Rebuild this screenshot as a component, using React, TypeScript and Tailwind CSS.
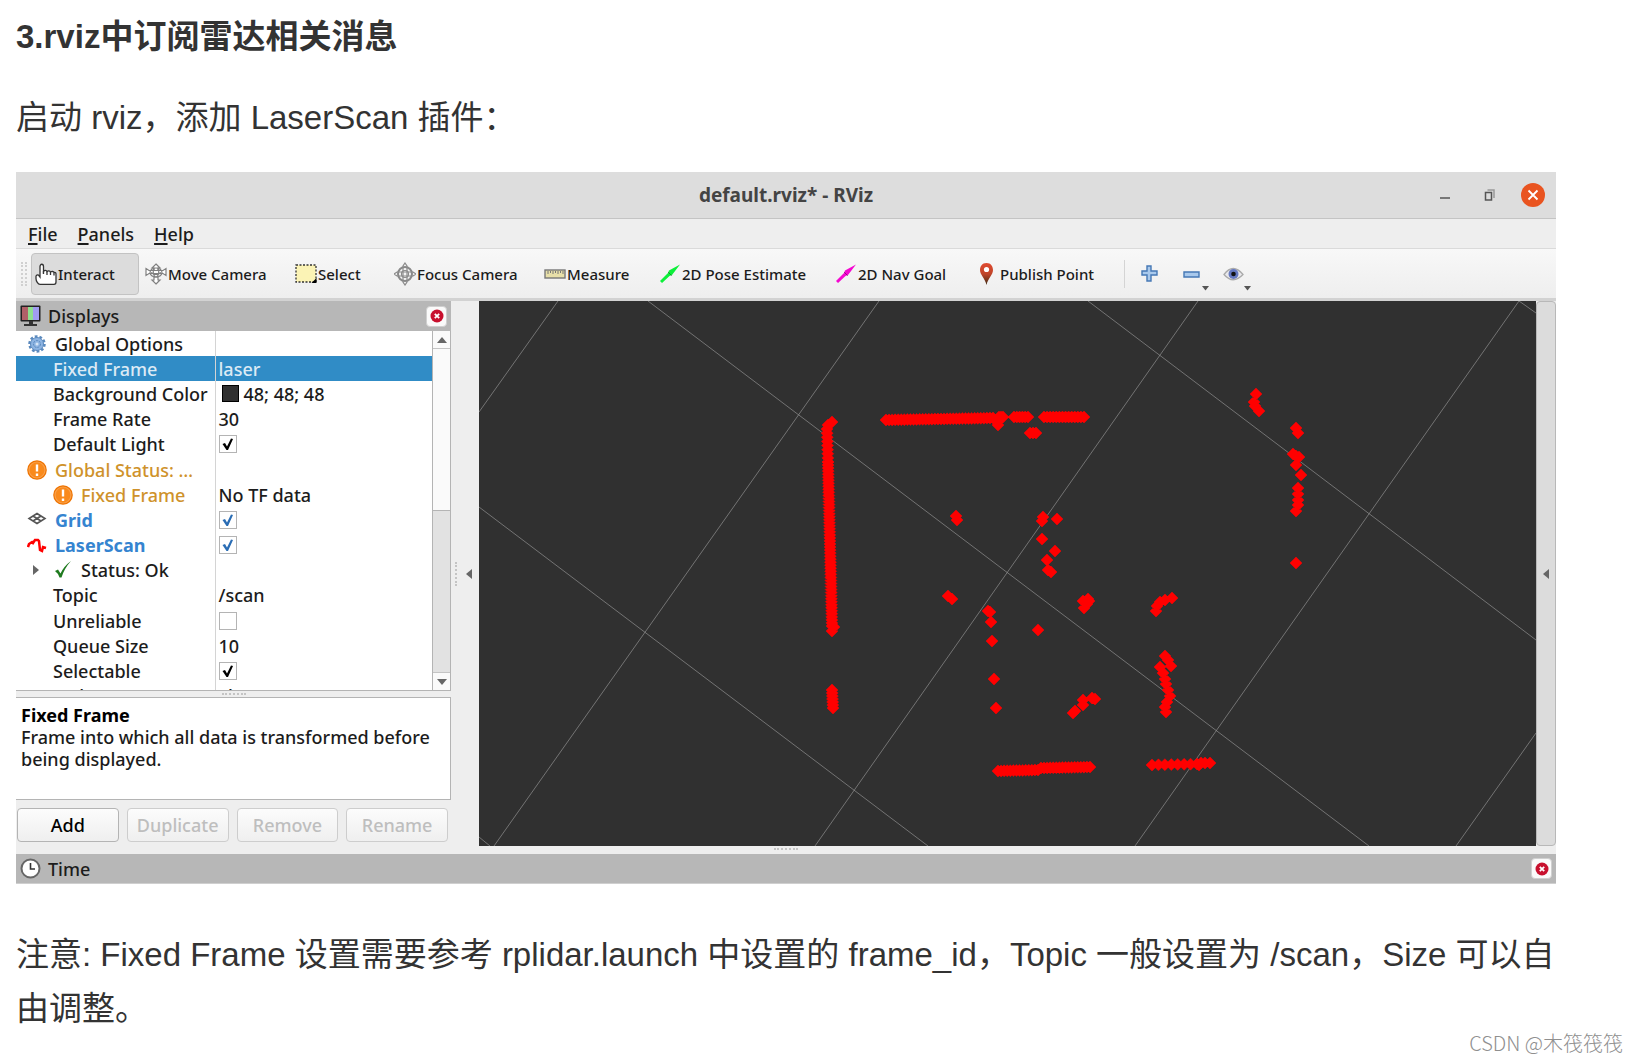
import type { ReactNode } from "react";
import clsx from "clsx";

type Point = [number, number];

type DisplayRow = {
  id: string;
  name: string;
  icon?: ReactNode;
  value?: string;
  checked?: boolean;
  swatch?: boolean;
  kind?: "selected" | "warning" | "display";
  nested?: boolean;
  expandable?: boolean;
};

const gridLines: [Point, Point][] = [
  [[479, 837], [490, 846]],
  [[479, 507], [928, 846]],
  [[648, 301], [1369, 846]],
  [[1088, 301], [1536, 640]],
  [[1519, 301], [1536, 313]],
  [[558, 301], [479, 412]],
  [[879, 301], [494, 846]],
  [[1198, 301], [815, 846]],
  [[1519, 301], [1135, 846]],
  [[1536, 733], [1456, 846]],
];

// each run is a wall seen by the scanner: start, end, number of hits
const scanRuns: [Point, Point, number][] = [
  [[827, 429], [828, 462], 9],
  [[828, 462], [832, 626], 55],
  [[832, 690], [833, 708], 7],
  [[886, 420], [993, 418], 36],
  [[999, 417], [1003, 417], 3],
  [[1014, 417], [1028, 417], 6],
  [[1044, 417], [1084, 417], 14],
  [[998, 771], [1038, 770], 14],
  [[1041, 768], [1090, 767], 17],
  [[1152, 765], [1197, 764], 8],
];

const scanPoints: Point[] = [
  [832, 422], [828, 425], [834, 627], [832, 631],
  [998, 425], [1030, 433], [1033, 433], [1036, 433],
  [956, 516], [957, 520], [1043, 517], [1042, 521], [1057, 519],
  [1042, 539], [1055, 551], [1047, 560], [1048, 570], [1051, 572],
  [948, 596], [952, 599], [988, 611], [990, 612], [991, 622], [992, 641], [1038, 630],
  [1083, 601], [1088, 599], [1089, 601], [1084, 608], [1087, 604],
  [1172, 598], [1165, 600], [1160, 602], [1157, 606], [1156, 611],
  [1165, 656], [1168, 660], [1171, 666], [1160, 667], [1163, 673], [1165, 679],
  [1166, 684], [1168, 690], [1170, 696], [1167, 702], [1165, 707], [1166, 712],
  [994, 679], [996, 708], [1073, 713], [1075, 711], [1083, 705], [1083, 700],
  [1092, 698], [1095, 699], [1199, 765], [1201, 763], [1205, 763], [1210, 763],
  [1256, 394], [1254, 402], [1255, 406], [1259, 411], [1296, 428], [1298, 433],
  [1293, 454], [1296, 456], [1299, 457], [1296, 465], [1301, 475], [1298, 488],
  [1298, 494], [1298, 500], [1298, 505], [1296, 511], [1296, 563],
];

const hits: Point[] = [
  ...scanRuns.flatMap(([a, b, n]) =>
    Array.from({ length: n }, (_, i): Point => {
      const t = i / (n - 1);
      return [a[0] + (b[0] - a[0]) * t, a[1] + (b[1] - a[1]) * t];
    }),
  ),
  ...scanPoints,
];

function SceneView() {
  return (
    <svg
      className="block h-[545px] min-w-0 flex-1 bg-[#303030]"
      viewBox="479 301 1057 545"
      preserveAspectRatio="xMidYMid slice"
      role="img"
      aria-label="Laser scan"
    >
      {gridLines.map(([a, b]) => (
        <line
          key={`${a}-${b}`}
          x1={a[0]}
          y1={a[1]}
          x2={b[0]}
          y2={b[1]}
          stroke="#a0a0a0"
          strokeOpacity="0.6"
        />
      ))}
      <path
        d={hits.map(([x, y]) => `M${x} ${y - 6}l6 6-6 6-6-6z`).join("")}
        fill="#f00"
        stroke="#f00"
        strokeWidth="0.500"
      />
    </svg>
  );
}

function HandIcon() {
  return (
    <svg className="h-[22px] w-[22px]" viewBox="0 0 22 22" fill="#fff" stroke="#333" strokeWidth="1.3">
      <path d="M5 14V3.500C5 .5 8.500 .5 8.500 3.500V8.500C9.500 7 11.500 7.200 12 8.500 13 7.500 15 7.700 15.500 9 17 8 18.500 8.500 19 9.500 20.500 9 21 10 21 11V19Q21 21.300 19 21.300H5C3 21.300 1 18 1 15.500V13Q2 11.500 3.500 12L5 14Z" />
      <path d="M12 8.500V12M15.500 9V12M19 10V12.500M8.500 8V11" fill="none" />
    </svg>
  );
}

function MoveIcon() {
  return (
    <svg className="h-[22px] w-[22px]" viewBox="0 0 22 22" fill="#fff" stroke="#808080" strokeWidth="1.2">
      <path d="M11 1l4 4h-2v3H9V5H7zM11 21l4-4h-2v-3H9v3H7z" />
      <path d="M1 5.500l3 2h14l3-2v7l-3-2H4l-3 2z" />
      <ellipse cx="11" cy="9.500" rx="6" ry="4.500" fill="none" />
      <path d="M6 9.500q5 4 10 0M9 5.500q-2 4 1 8.500M13 5.500q2 4-1 8.500" fill="none" />
    </svg>
  );
}

function SelectIcon() {
  return (
    <svg className="h-[22px] w-[22px]" viewBox="0 0 22 22">
      <rect x="1" y="2" width="20" height="17" fill="#fbf3b5" stroke="#333" strokeWidth="1.300" strokeDasharray="2 1.500" />
      <path d="M21.500 15v5h-5z" fill="#000" />
    </svg>
  );
}

function FocusIcon() {
  return (
    <svg className="h-6 w-[22px]" viewBox="0 0 22 24" fill="none" stroke="#8a8a8a" strokeWidth="1.200">
      <circle cx="11" cy="12" r="7" strokeWidth="2" />
      <circle cx="11" cy="12" r="3.500" />
      <path d="M11 1l2 3v16l-2 3-2-3V4zM0 12l3-2h16l3 2-3 2H3z" />
    </svg>
  );
}

function MeasureIcon() {
  return (
    <svg className="h-[22px] w-[22px]" viewBox="0 0 22 22">
      <rect x="1" y="7" width="20" height="8" fill="#e7dfa8" stroke="#777" strokeWidth="1.400" />
      <path d="M4 8v3M6.500 8v2M9 8v3M11.500 8v2M14 8v3M16.500 8v2M19 8v3" stroke="#777" />
    </svg>
  );
}

function ArrowIcon({ color }: { color: string }) {
  return (
    <svg className="h-[22px] w-[22px]" viewBox="0 0 22 22">
      <path d="M1 18l8-8 1-2.500 11-6-8 10.500-2.500 1-7.500 7z" fill={color} />
      <path d="M9 9l4 4" stroke="#000" strokeOpacity=".35" />
    </svg>
  );
}

function PinIcon() {
  return (
    <svg className="h-[22px] w-5" viewBox="0 0 20 22">
      <defs>
        <linearGradient id="pin" x2="0" y2="1">
          <stop offset="0" stopColor="#e04a30" />
          <stop offset=".5" stopColor="#c0452a" />
          <stop offset="1" stopColor="#3c2a14" />
        </linearGradient>
      </defs>
      <path d="M7.500 0C3 0 1 3.500 1 7c0 5 5 8 6.500 15C9 15 14 12 14 7c0-3.500-2-7-6.500-7z" fill="url(#pin)" />
      <circle cx="7.500" cy="6.500" r="2.600" fill="#fff" />
    </svg>
  );
}

function GearIcon() {
  return (
    <svg className="h-[18px] w-5" viewBox="0 0 20 18" fill="none">
      <circle cx="10" cy="9" r="7.500" stroke="#5a89bd" strokeWidth="2.500" strokeDasharray="2.700 2" />
      <circle cx="10" cy="9" r="6.500" fill="#8db4e2" stroke="#5a89bd" />
      <circle cx="10" cy="9" r="3.500" stroke="#5a89bd" strokeDasharray="2 1" />
      <circle cx="10" cy="9" r="1.500" fill="#d5e5f6" />
    </svg>
  );
}

function WarnIcon() {
  return (
    <svg className="h-5 w-5" viewBox="0 0 20 20">
      <circle cx="10" cy="10" r="9.800" fill="#ee7300" />
      <circle cx="10" cy="10" r="8" fill="#f98a1c" stroke="#f9a04a" strokeWidth="1.200" />
      <path d="M10 4.500v7M10 13.500v2.500" stroke="#fff" strokeWidth="2.400" />
    </svg>
  );
}

function GridIcon() {
  return (
    <svg className="h-5 w-5" viewBox="0 0 20 20" fill="none" stroke="#555" strokeWidth="1.600">
      <path d="M10 3.500L18 8.500 10 13.500 2 8.500zM6 6l8 5M14 6l-8 5" />
    </svg>
  );
}

function ScanIcon() {
  return (
    <svg className="h-5 w-5" viewBox="0 0 20 20" fill="none" stroke="#f00" strokeWidth="2.500">
      <path d="M1 12l1-3 3-2 1 1 2-3h3l1 1 1 9 2 1 1-4 3 1" />
    </svg>
  );
}

function OkIcon() {
  return (
    <svg className="h-5 w-5" viewBox="0 0 20 20">
      <path d="M2 11l3-1.500 2.500 4Q11 6 18 1 11.500 8 8.500 17.500H6.500Q5 13 2 11z" fill="#1f7a1f" />
    </svg>
  );
}

const tools = [
  { label: "Interact", icon: <HandIcon />, box: "w-[108px] rounded border border-[#c3c3c3] bg-[#dcdcdc]", active: true },
  { label: "Move Camera", icon: <MoveIcon />, box: "ml-[3px] w-[150px]" },
  { label: "Select", icon: <SelectIcon />, box: "w-[99px]" },
  { label: "Focus Camera", icon: <FocusIcon />, box: "w-[150px]" },
  { label: "Measure", icon: <MeasureIcon />, box: "w-[115px]" },
  { label: "2D Pose Estimate", icon: <ArrowIcon color="#0cf03a" />, box: "w-[176px]" },
  { label: "2D Nav Goal", icon: <ArrowIcon color="#f408d0" />, box: "w-[144px]" },
  { label: "Publish Point", icon: <PinIcon />, box: "w-[144px]" },
];

const rows: DisplayRow[] = [
  { id: "options", name: "Global Options", icon: <GearIcon /> },
  { id: "frame", name: "Fixed Frame", value: "laser", kind: "selected" },
  { id: "background", name: "Background Color", value: "48; 48; 48", swatch: true },
  { id: "rate", name: "Frame Rate", value: "30" },
  { id: "light", name: "Default Light", checked: true },
  { id: "status", name: "Global Status: …", icon: <WarnIcon />, kind: "warning" },
  { id: "status-frame", name: "Fixed Frame", icon: <WarnIcon />, value: "No TF data", kind: "warning", nested: true },
  { id: "grid", name: "Grid", icon: <GridIcon />, checked: true, kind: "display" },
  { id: "scan", name: "LaserScan", icon: <ScanIcon />, checked: true, kind: "display" },
  { id: "scan-status", name: "Status: Ok", icon: <OkIcon />, nested: true, expandable: true },
  { id: "topic", name: "Topic", value: "/scan" },
  { id: "unreliable", name: "Unreliable", checked: false },
  { id: "queue", name: "Queue Size", value: "10" },
  { id: "selectable", name: "Selectable", checked: true },
  { id: "style", name: "Style", value: "Flat Squares" },
];

function Triangle({ className }: { className?: string }) {
  return (
    <svg className={clsx("h-[6px] w-[10px]", className)} viewBox="0 0 10 6">
      <path d="M0 6L5 0l5 6z" fill="#666" />
    </svg>
  );
}

function PanelClose({ label }: { label: string }) {
  return (
    <button
      aria-label={label}
      className="flex h-[21px] w-[21px] items-center justify-center rounded-sm border border-[#d0d0d0] bg-[#fafafa]"
    >
      <svg className="h-[14px] w-[14px]" viewBox="0 0 14 14">
        <circle cx="7" cy="7" r="6.500" fill="#c8102e" />
        <path d="M4.800 4.800l4.400 4.400M9.200 4.800l-4.400 4.400" stroke="#fff" strokeWidth="1.800" />
      </svg>
    </button>
  );
}

function CheckBox({ row }: { row: DisplayRow }) {
  return (
    <span className="grid h-[18px] w-[18px]">
      <input
        id={row.id}
        type="checkbox"
        defaultChecked={row.checked}
        className="peer appearance-none border border-[#b4b4b4] bg-white [grid-area:1/1]"
      />
      <svg
        className={clsx(
          "pointer-events-none invisible h-[18px] w-[18px] [grid-area:1/1] peer-checked:visible",
          row.kind === "display" ? "text-[#2a6db5]" : "text-black",
        )}
        viewBox="0 0 18 18"
      >
        <path d="M3.500 9l2.500-1 2 3.500 4-8 2 .500-5 11H7.500z" fill="currentColor" />
      </svg>
    </span>
  );
}

function PropertyRow({ row }: { row: DisplayRow }) {
  return (
    <tr className={clsx(row.kind === "selected" && "bg-[#308cc6] text-[#dceaf5]")}>
      <th
        scope="row"
        className={clsx(
          "border-r border-[#d4d4d4] p-0 text-left",
          row.kind === "display" ? "font-bold text-[#3584d0]" : "font-medium",
          row.kind === "warning" && "text-[#cf922b]",
        )}
      >
        <div className={clsx("flex h-5 items-center whitespace-nowrap", row.icon ? "pl-[11px]" : "pl-[37px]")}>
          {row.nested && (
            <span className="w-[26px] shrink-0 pl-1">
              {row.expandable && <Triangle className="rotate-90" />}
            </span>
          )}
          {row.icon && <span className="mr-2 w-5 shrink-0">{row.icon}</span>}
          {row.checked === undefined ? row.name : <label htmlFor={row.id}>{row.name}</label>}
        </div>
      </th>
      <td className="p-0">
        <div className="flex h-5 items-center pl-[3px]">
          {row.swatch && (
            <span className="mr-[5px] ml-[3px] h-[17px] w-[17px] border border-black bg-[#303030]" />
          )}
          {row.checked === undefined ? row.value : <CheckBox row={row} />}
        </div>
      </td>
    </tr>
  );
}

function DisplaysPanel() {
  return (
    <section className="flex w-[435px] shrink-0 flex-col">
      <div className="flex h-[30px] items-center bg-[#b7b7b7] pr-1 pl-1">
        <svg className="mr-[7px] h-[22px] w-[21px]" viewBox="0 0 21 22">
          <rect x=".5" y=".5" width="20" height="16" rx="1" fill="#222" />
          <path d="M2 2h6v13H2z" fill="#b06068" />
          <path d="M8 2h5v13H8z" fill="#8fe08f" />
          <path d="M13 2h6v13h-6z" fill="#a09cf0" />
          <path d="M9 16h4v3h4v2H4v-2h5z" fill="#333" />
        </svg>
        <h2 className="flex-1">Displays</h2>
        <PanelClose label="Close Displays" />
      </div>
      <div className="flex h-[360px] border-r border-b border-[#b4b4b4] bg-white">
        <div className="min-w-0 flex-1 overflow-hidden">
          <table className="h-[378px] w-full table-fixed border-collapse">
            <colgroup>
              <col className="w-[199px]" />
              <col />
            </colgroup>
            <tbody>
              {rows.map((row) => (
                <PropertyRow key={row.id} row={row} />
              ))}
            </tbody>
          </table>
        </div>
        <div className="flex w-[18px] flex-col border-l border-[#b4b4b4] bg-[#e2e2e2]">
          <button aria-label="Scroll up" className="flex h-[18px] items-center justify-center border-b border-[#c4c4c4] bg-[#fafafa]">
            <Triangle />
          </button>
          <div className="h-[162px] border-b border-[#b4b4b4] bg-[#fafafa]" />
          <div className="flex-1" />
          <button aria-label="Scroll down" className="flex h-[18px] items-center justify-center border-t border-[#c4c4c4] bg-[#fafafa]">
            <Triangle className="rotate-180" />
          </button>
        </div>
      </div>
      <div className="flex h-[6px] items-center justify-center">
        <span className="w-6 border-t-2 border-dotted border-[#c4c4c4]" />
      </div>
      <div className="h-[103px] border-t border-r border-b border-[#b4b4b4] bg-white pt-[6px] pl-[5px] leading-[22px]">
        <h3 className="font-bold text-black">Fixed Frame</h3>
        <p>
          Frame into which all data is transformed before
          <br />
          being displayed.
        </p>
      </div>
      <div className="grid grid-cols-4 gap-2 pt-2 pr-[3px] pl-px">
        {["Add", "Duplicate", "Remove", "Rename"].map((label) => (
          <button
            key={label}
            disabled={label !== "Add"}
            className="h-[34px] rounded border border-[#b4b4b4] bg-linear-to-b from-[#fcfcfc] to-[#efefef] text-black disabled:border-[#cdcdcd] disabled:text-[#bebebe]"
          >
            {label}
          </button>
        ))}
      </div>
    </section>
  );
}

function Toolbar() {
  return (
    <div className="flex h-[49px] items-center bg-linear-to-b from-[#f8f8f8] to-[#eeeeee] pl-[5px] text-[15px]">
      <span className="mr-[4px] h-6 w-[6px] border-x-2 border-dotted border-[#d0d0d0]" />
      {tools.map((tool) => (
        <button
          key={tool.label}
          aria-pressed={tool.active}
          className={clsx("flex h-[42px] shrink-0 items-center gap-px pl-[3px] whitespace-nowrap", tool.box)}
        >
          {tool.icon}
          <span>{tool.label}</span>
        </button>
      ))}
      <span className="mx-[4px] h-7 w-px bg-[#d4d4d4]" />
      <button aria-label="Add tool" className="ml-3 w-[17px]">
        <svg className="h-[17px] w-[17px]" viewBox="0 0 17 17">
          <path d="M6 1h4v5h6v4h-6v6H6v-6H1V6h5z" fill="#a9c9ec" stroke="#4578b5" strokeWidth="1.400" />
        </svg>
      </button>
      <button aria-label="Remove tool" className="ml-[25px] w-[28px]">
        <svg className="h-[42px] w-[28px]" viewBox="0 0 28 42">
          <path d="M1 19h15v5H1z" fill="#a9c9ec" stroke="#4578b5" strokeWidth="1.400" />
          <path d="M19 33h7l-3.500 4.500z" fill="#555" />
        </svg>
      </button>
      <button aria-label="Views" className="ml-[12px] w-[30px]">
        <svg className="h-[42px] w-[30px]" viewBox="0 0 30 42">
          <path d="M1 21.500Q10 9.500 20 21.500 10 32 1 21.500z" fill="#e9e9ec" stroke="#aaa" strokeWidth="1.300" />
          <circle cx="10.500" cy="21" r="5" fill="#6478c0" />
          <circle cx="10.500" cy="21" r="2.300" fill="#111" />
          <path d="M21 33h7l-3.500 4.500z" fill="#555" />
        </svg>
      </button>
    </div>
  );
}

function RvizWindow() {
  return (
    <div className="mr-[82px] ml-4 bg-[#eeeeee] font-['Noto_Sans',sans-serif] text-[18px] font-medium text-[#1c1c1c]">
      <header className="grid h-[47px] grid-cols-[1fr_auto_1fr] items-center border-b border-[#c4c4c4] bg-[#dddddd]">
        <h2 className="col-start-2 text-[19px] font-bold text-[#444]">default.rviz* - RViz</h2>
        <div className="flex items-center justify-end pr-[11px]">
          <button aria-label="Minimize" className="mr-[33px]">
            <svg className="h-4 w-[11px]" viewBox="0 0 11 16">
              <path d="M0 11h10" stroke="#777" strokeWidth="2" />
            </svg>
          </button>
          <button aria-label="Restore" className="mr-[25px]">
            <svg className="h-[12px] w-[12px]" viewBox="0 0 12 12" fill="none" stroke="#555" strokeWidth="1.500">
              <path d="M1.500 3.500h6v7.500h-6z" />
              <path d="M3.500 1H10V9" stroke="#999" />
            </svg>
          </button>
          <button aria-label="Close">
            <svg className="h-6 w-6" viewBox="0 0 24 24">
              <circle cx="12" cy="12" r="12" fill="#e95420" />
              <path d="M7.500 7.500l9 9M16.500 7.500l-9 9" stroke="#fff" strokeWidth="1.800" />
            </svg>
          </button>
        </div>
      </header>
      <nav className="flex h-[30px] items-center gap-5 border-b border-[#dadada] pl-3">
        {["File", "Panels", "Help"].map((label) => (
          <button key={label}>
            <span className="underline decoration-2 underline-offset-2">{label[0]}</span>
            {label.slice(1)}
          </button>
        ))}
      </nav>
      <Toolbar />
      <div className="flex border-t-3 border-[#d2d2d2]">
        <DisplaysPanel />
        <div className="flex w-7 shrink-0 items-center justify-between pr-[5px] pl-1">
          <span className="h-6 border-l-2 border-dotted border-[#c4c4c4]" />
          <Triangle className="-rotate-90" />
        </div>
        <SceneView />
        <div className="flex w-5 shrink-0 items-center justify-center rounded border border-[#b8b8b8] bg-[#dcdcdc]">
          <Triangle className="-rotate-90" />
        </div>
      </div>
      <div className="flex h-2 items-start justify-center pt-[2px]">
        <span className="w-6 border-t-2 border-dotted border-[#c4c4c4]" />
      </div>
      <footer className="flex h-[30px] items-center border-b border-[#cfcfcf] bg-[#b7b7b7] pr-1 pl-1">
        <svg className="mr-[7px] h-[21px] w-[21px]" viewBox="0 0 21 21">
          <circle cx="10.500" cy="10.500" r="9" fill="#fff" stroke="#666" strokeWidth="2" />
          <path d="M10.500 5v6H15" fill="none" stroke="#333" strokeWidth="1.600" />
        </svg>
        <h2 className="flex-1">Time</h2>
        <PanelClose label="Close Time" />
      </footer>
    </div>
  );
}

export default function App() {
  return (
    <main className="relative min-h-screen bg-white pt-[10px] font-['Liberation_Sans','Noto_Sans_CJK_SC',sans-serif] text-[33px] leading-[54px] text-[#333]">
      <h1 className="mb-[27px] px-4 font-bold">3.rviz中订阅雷达相关消息</h1>
      <p className="mb-[27px] px-4">启动 rviz，添加 LaserScan 插件：</p>
      <div className="leading-6">
        <RvizWindow />
      </div>
      <p className="mt-[44px] mr-[82px] ml-4">
        注意: Fixed Frame 设置需要参考 rplidar.launch 中设置的 frame_id，Topic 一般设置为 /scan，Size 可以自由调整。
      </p>
      <small className="absolute right-[15px] bottom-1 font-['Noto_Sans_CJK_SC',sans-serif] text-[20px] leading-7 font-light text-[#8f8f8f]">
        CSDN @木筏筏筏
      </small>
    </main>
  );
}
